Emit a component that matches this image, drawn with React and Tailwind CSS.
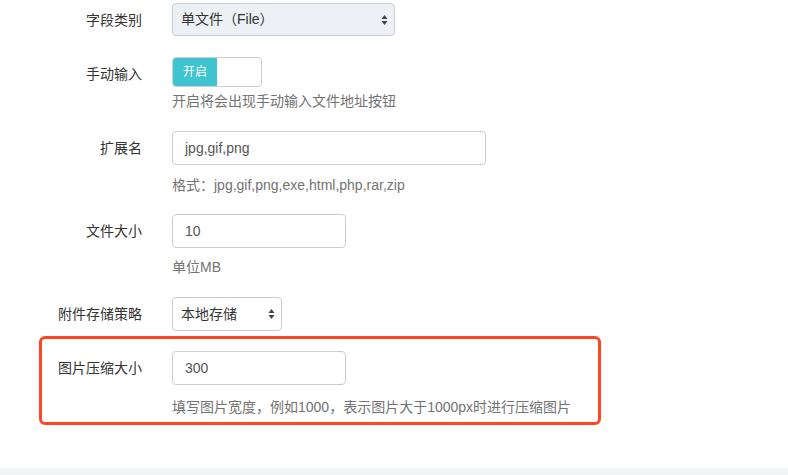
import * as React from "react";

const font = { fontFamily: '"Liberation Sans", "Noto Sans CJK SC", sans-serif' };

function Arrows() {
  return (
    <svg width="7" height="12" viewBox="0 0 7 12" className="shrink-0">
      <path d="M3.5 1 L6.5 5 L0.5 5 Z" fill="#444" />
      <path d="M3.5 11 L6.5 7 L0.5 7 Z" fill="#444" />
    </svg>
  );
}

function Label({ children, w = "w-[142px]" }) {
  return (
    <div className={`${w} shrink-0 text-right pt-[7px] text-[14px] leading-[20px] text-[#333]`}>
      {children}
    </div>
  );
}

function Help({ children, className = "" }) {
  return (
    <div className={`text-[14px] leading-[20px] text-[#737373] ${className}`}>{children}</div>
  );
}

function TextInput({ value, w }) {
  return (
    <div
      className={`${w} h-[34px] rounded-[4px] border border-[#c9ced6] bg-white pl-[12px] flex items-center text-[14px] text-[#555]`}
    >
      {value}
    </div>
  );
}

export default function App() {
  return (
    <div className="min-h-[475px] bg-white flex flex-col" style={font}>
      <div className="flex-1 pt-[3px]">
        <div className="flex">
          <Label>字段类别</Label>
          <div className="ml-[30px] w-[223px] h-[33px] rounded-[4px] border border-[#c9ced6] bg-[#edf0f4] flex items-center justify-between pl-[8px] pr-[6px] text-[14px] text-[#333]">
            <span>单文件（File）</span>
            <Arrows />
          </div>
        </div>

        <div className="flex mt-[21px]">
          <Label>手动输入</Label>
          <div className="ml-[30px]">
            <div className="w-[90px] h-[30px] rounded-[4px] border border-[#cfcfcf] bg-white flex overflow-hidden">
              <div className="w-[44px] h-full bg-[#41c4d2] flex items-center justify-center text-white text-[12px]">
                开启
              </div>
            </div>
            <Help className="mt-[4px]">开启将会出现手动输入文件地址按钮</Help>
          </div>
        </div>

        <div className="flex mt-[20px]">
          <Label>扩展名</Label>
          <div className="ml-[30px]">
            <TextInput value="jpg,gif,png" w="w-[314px]" />
            <Help className="mt-[10px]">格式：jpg,gif,png,exe,html,php,rar,zip</Help>
          </div>
        </div>

        <div className="flex mt-[19px]">
          <Label>文件大小</Label>
          <div className="ml-[30px]">
            <TextInput value="10" w="w-[174px]" />
            <Help className="mt-[9px]">单位MB</Help>
          </div>
        </div>

        <div className="flex mt-[20px]">
          <Label>附件存储策略</Label>
          <div className="ml-[30px] w-[110px] h-[34px] rounded-[4px] border border-[#c9ced6] bg-white flex items-center justify-between pl-[8px] pr-[6px] text-[14px] text-[#333]">
            <span>本地存储</span>
            <Arrows />
          </div>
        </div>

        <div className="ml-[39px] mt-[5px] w-[562px] rounded-[6px] border-[3px] border-[#ff4521] pt-[12px] pb-[5px] flex">
          <Label w="w-[100px]">图片压缩大小</Label>
          <div className="ml-[30px]">
            <TextInput value="300" w="w-[174px]" />
            <Help className="mt-[12px]">填写图片宽度，例如1000，表示图片大于1000px时进行压缩图片</Help>
          </div>
        </div>
      </div>
      <div className="h-[7px] bg-[#f3f4f6]" />
    </div>
  );
}
